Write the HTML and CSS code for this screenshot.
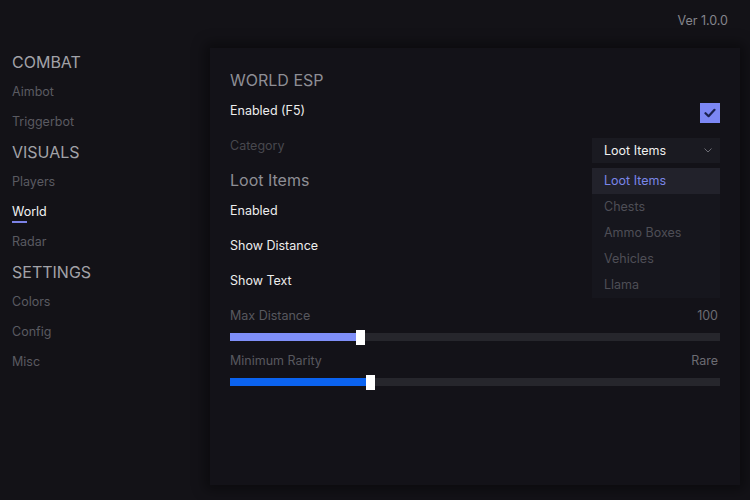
FILE: index.html
```html
<!DOCTYPE html>
<html>
  <head>
    <meta charset="UTF-8">
    <meta name="viewport" content="width=device-width, initial-scale=1.0">
    <title>World ESP</title>
    <link rel="stylesheet" href="styles.css">
  </head>
  <body>
    <div class="topbar">
      <span class="version">Ver 1.0.0</span>
    </div>
    <div class="app">
      <nav class="sidebar">
        <div class="section">COMBAT</div>
        <div class="item">Aimbot</div>
        <div class="item">Triggerbot</div>
        <div class="section">VISUALS</div>
        <div class="item">Players</div>
        <div class="item active">World</div>
        <div class="item">Radar</div>
        <div class="section">SETTINGS</div>
        <div class="item">Colors</div>
        <div class="item">Config</div>
        <div class="item">Misc</div>
      </nav>

      <main class="panel">
        <div class="title">WORLD ESP</div>
        <div class="row gap">
          <span class="label">Enabled (F5)</span>
          <span class="checkbox">
            <svg width="12" height="10" viewBox="0 0 12 10">
              <path d="M1.5 5.2 L4.6 8.2 L10.5 1.8" fill="none" stroke="#1b2150" stroke-width="2.2" stroke-linecap="round" stroke-linejoin="round"/>
            </svg>
          </span>
        </div>
        <div class="row gap">
          <span class="label muted">Category</span>
          <div class="select">
            <div class="select-box">
              <span>Loot Items</span>
              <svg width="8" height="5" viewBox="0 0 8 5">
                <path d="M0.5 0.5 L4 4 L7.5 0.5" fill="none" stroke="#6c6c74" stroke-width="1"/>
              </svg>
            </div>
            <ul class="options">
              <li class="selected">Loot Items</li>
              <li>Chests</li>
              <li>Ammo Boxes</li>
              <li>Vehicles</li>
              <li>Llama</li>
            </ul>
          </div>
        </div>
        <div class="subtitle">Loot Items</div>
        <div class="row gap">
          <span class="label">Enabled</span>
        </div>
        <div class="row gap">
          <span class="label">Show Distance</span>
        </div>
        <div class="row">
          <span class="label">Show Text</span>
        </div>

        <div class="slider-head first">
          <span>Max Distance</span>
          <span>100</span>
        </div>
        <div class="slider">
          <div class="fill light" style="width: 126px"></div>
          <div class="thumb"></div>
        </div>

        <div class="slider-head">
          <span>Minimum Rarity</span>
          <span>Rare</span>
        </div>
        <div class="slider">
          <div class="fill blue" style="width: 136px"></div>
          <div class="thumb"></div>
        </div>
      </main>
    </div>
  </body>
</html>
```

FILE: styles.css
```css
body {
  margin: 0;
  width: 750px;
  height: 500px;
  overflow: hidden;
  background-color: #131217;
  font-family: Inter, "Noto Sans", sans-serif;
  color: #ededed;
}

.topbar {
  height: 47px;
  display: flex;
  justify-content: flex-end;
  padding-right: 22px;
}

.version {
  margin-top: 13px;
  font-size: 12.5px;
  line-height: 16px;
  color: #85858c;
}

.app {
  display: flex;
}

.sidebar {
  width: 198px;
  padding-left: 12px;
}

.section {
  font-size: 16px;
  line-height: 30px;
  color: #a2a2a8;
}

.item {
  position: relative;
  font-size: 12.5px;
  line-height: 30px;
  color: #5a5a61;
}

.item.active {
  color: #f2f2f2;
}

.item.active::after {
  content: "";
  position: absolute;
  left: 0;
  top: 24px;
  width: 15px;
  height: 2px;
  background-color: #7c82e6;
}

.panel {
  width: 490px;
  height: 420px;
  margin-top: 1px;
  padding: 17px 20px 0 20px;
  background-color: #131218;
  box-shadow: 0 0 12px 5px rgba(0, 0, 0, 0.4);
}

.title,
.subtitle {
  height: 30px;
  line-height: 30px;
  font-size: 16px;
  color: #8e8e95;
}

.row {
  height: 30px;
  display: flex;
  align-items: center;
  justify-content: space-between;
}

.row.gap {
  margin-bottom: 5px;
}

.label {
  font-size: 12.5px;
}

.label.muted {
  color: #48484e;
}

.checkbox {
  width: 20px;
  height: 20px;
  margin-top: 6px;
  background-color: #7c87f4;
  display: flex;
  align-items: center;
  justify-content: center;
}

.select {
  position: relative;
  align-self: flex-start;
  margin-top: 8px;
  width: 128px;
}

.select-box {
  height: 25px;
  padding: 0 8px 0 12px;
  background-color: #1a1a21;
  display: flex;
  align-items: center;
  justify-content: space-between;
  font-size: 12.5px;
  color: #f0f0f0;
}

.options {
  position: absolute;
  top: 30px;
  left: 0;
  width: 128px;
  margin: 0;
  padding: 0;
  list-style: none;
  background-color: #16161d;
  z-index: 2;
}

.options li {
  height: 26px;
  line-height: 26px;
  padding-left: 12px;
  font-size: 12.5px;
  color: #4e4e56;
}

.options li.selected {
  background-color: #22222b;
  color: #7a86e8;
}

.slider-head {
  height: 20px;
  margin-top: 6px;
  display: flex;
  justify-content: space-between;
  align-items: center;
  font-size: 12.5px;
  color: #58585f;
}

.slider-head.first {
  margin-top: 10px;
}

.slider-head span:last-child {
  color: #6c6c73;
  margin-right: 2px;
}

.slider {
  height: 14px;
  margin-top: 5px;
  display: flex;
  align-items: center;
  background: linear-gradient(#26262c, #26262c) no-repeat 0 3px / 100% 8px;
}

.fill {
  height: 8px;
}

.fill.light {
  background-color: #7f8ff8;
}

.fill.blue {
  background-color: #0b63f0;
}

.thumb {
  width: 9px;
  height: 15px;
  background-color: #ffffff;
}
```
